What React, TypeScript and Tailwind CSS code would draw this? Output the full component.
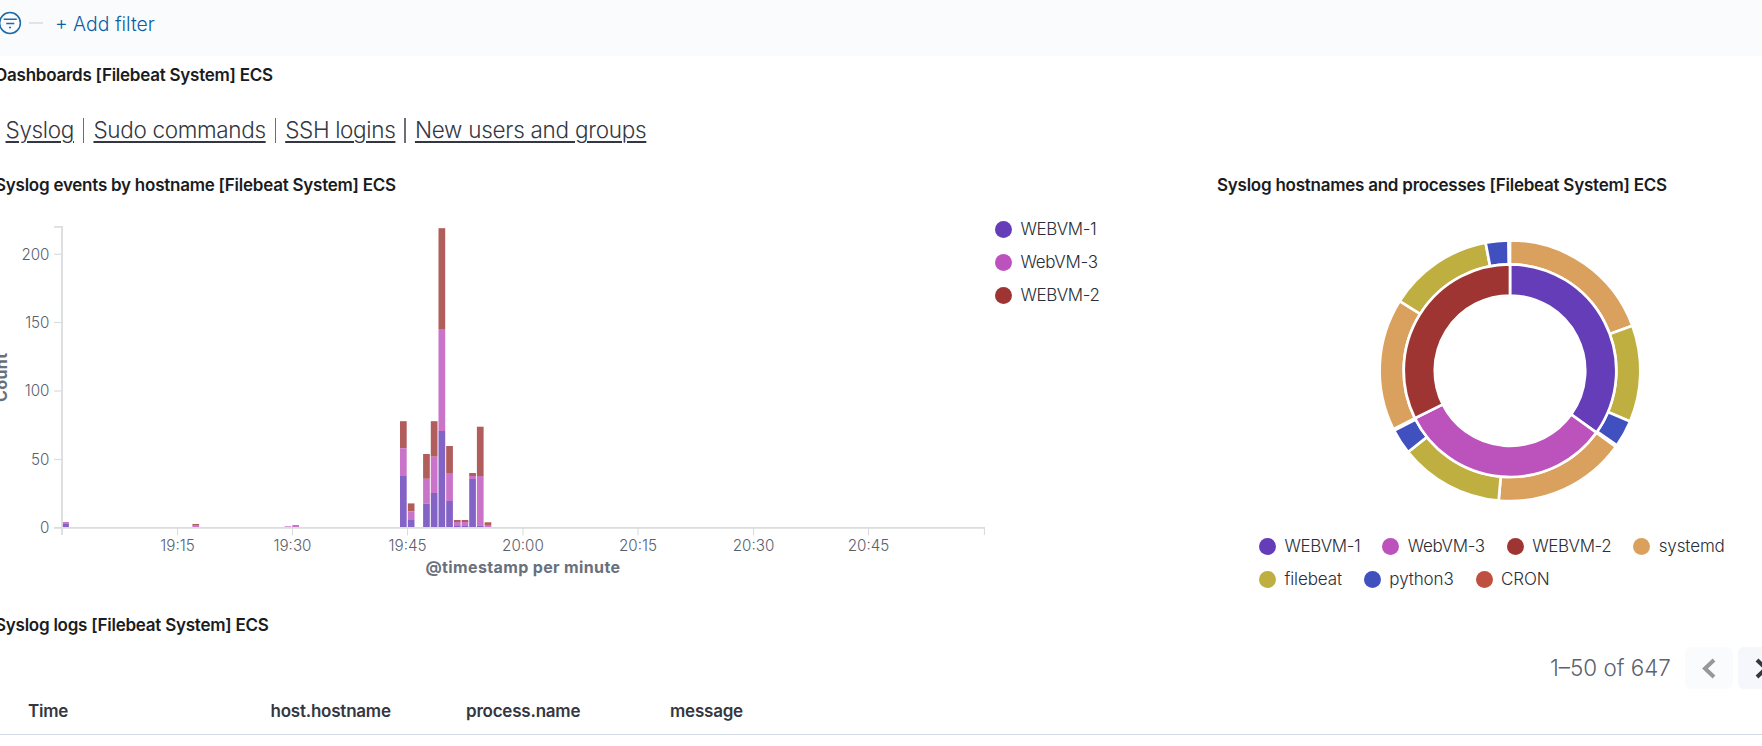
import React from "react";

const PURPLE = "#663db8";
const PINK = "#bc52bc";
const RED = "#9e3533";
const ORANGE = "#daa05d";
const OLIVE = "#bfaf40";
const BLUE = "#4050bf";
const BRICK = "#bf5040";

const BASE = 527;

// Left edge, then the tops of the red, pink and purple segments.
const bars: [number, number, number, number][] = [
  [62.2, 522, 522, 524],
  [192.4, 524, 525.7, 527],
  [284.6, 526.3, 526.3, 527],
  [292.3, 525, 525, 527],
  [400, 421.2, 448.2, 476],
  [407.8, 503.4, 511.3, 520],
  [423.1, 454, 478.8, 503.7],
  [430.8, 421.2, 456.7, 493],
  [438.5, 228.2, 329, 431],
  [446.2, 446, 473, 501],
  [453.9, 520, 522, 526],
  [461.6, 520, 522, 526],
  [469.2, 473, 476, 479],
  [476.9, 426.7, 476, 525.8],
  [484.6, 522.3, 525, 527],
];

const yTicks: [string, number][] = [
  ["200", 254.3],
  ["150", 322.5],
  ["100", 391],
  ["50", 459.5],
  ["0", 527.5],
];

const xTicks: [string, number][] = [
  ["19:15", 177.5],
  ["19:30", 292.5],
  ["19:45", 407.5],
  ["20:00", 523],
  ["20:15", 638],
  ["20:30", 753.5],
  ["20:45", 868.5],
];

type Slice = [number, number, string];

const inner: Slice[] = [
  [0, 125.6, PURPLE],
  [125.6, 243.4, PINK],
  [243.4, 360, RED],
];

const outer: Slice[] = [
  [0, 69.8, ORANGE],
  [69.8, 112.9, OLIVE],
  [112.9, 124.9, BLUE],
  [125.7, 185, ORANGE],
  [185, 231.4, OLIVE],
  [231.4, 242.7, BLUE],
  [243.4, 302.3, ORANGE],
  [302.3, 349.2, OLIVE],
  [349.2, 359.3, BLUE],
];

function arc(r0: number, r1: number, a0: number, a1: number) {
  const p = (r: number, a: number) => {
    const t = (a * Math.PI) / 180;
    return `${(r * Math.sin(t)).toFixed(2)} ${(-r * Math.cos(t)).toFixed(2)}`;
  };
  const big = a1 - a0 > 180 ? 1 : 0;
  return `M${p(r1, a0)}A${r1} ${r1} 0 ${big} 1 ${p(r1, a1)}L${p(r0, a1)}A${r0} ${r0} 0 ${big} 0 ${p(r0, a0)}Z`;
}

function Title({ children }: { children: React.ReactNode }) {
  return (
    <h2 className="whitespace-nowrap text-[17px] leading-6 font-semibold tracking-[-0.245px] text-[#1a1c21]">
      {children}
    </h2>
  );
}

function Histogram() {
  return (
    <svg className="block h-[380px] w-[990px] shrink-0" viewBox="0 205 990 380">
      <g opacity="0.8">
        {bars.map(([x, r, p, v]) => (
          <g key={x}>
            <rect x={x} y={r} width="6.7" height={p - r} fill={RED} />
            <rect x={x} y={p} width="6.7" height={v - p} fill={PINK} />
            <rect x={x} y={v} width="6.7" height={BASE - v} fill={PURPLE} />
          </g>
        ))}
      </g>
      <g stroke="#dadcdd" fill="none">
        <path d="M62 226V535" strokeWidth="1.8" />
        <path d="M54 226.9H62" strokeWidth="1.7" />
        <path d="M54 527.8H985" strokeWidth="1.8" />
        <path d="M984.5 528V535" strokeWidth="1.2" />
        {yTicks.map(([l, y]) => (
          <path key={l} d={`M54 ${y}H62`} strokeWidth="1.2" />
        ))}
        {xTicks.map(([l, x]) => (
          <path key={l} d={`M${x} 528V535.5`} strokeWidth="1.1" />
        ))}
      </g>
      <g fill="#59606d" fontSize="15.2" fontWeight="300">
        {yTicks.map(([l, y]) => (
          <text key={l} x="49.5" y={y + 5.2} textAnchor="end">
            {l}
          </text>
        ))}
        {xTicks.map(([l, x]) => (
          <text key={l} x={x} y="551.3" textAnchor="middle">
            {l}
          </text>
        ))}
      </g>
      <g fill="#69707d" fontSize="16" fontWeight="700">
        <text x="425.5" y="573" textLength="194.5">
          @timestamp per minute
        </text>
        <text transform="translate(7 402) rotate(-90)" textLength="49">
          Count
        </text>
      </g>
    </svg>
  );
}

function LegendItem({ color, label }: { color: string; label: string }) {
  const spacing = label.startsWith("WEB")
    ? "tracking-[-0.43px]"
    : label.startsWith("Web")
      ? "tracking-[-0.32px]"
      : "tracking-[-0.12px]";
  return (
    <li className="flex h-[33px] items-center gap-[8.5px]">
      <span className="size-[17px] rounded-full" style={{ backgroundColor: color }} />
      <span className={`whitespace-nowrap text-[17px] font-light text-[#2b2e38] ${spacing}`}>{label}</span>
    </li>
  );
}

function Donut() {
  return (
    <svg className="block h-[290px] w-[300px]" viewBox="-150 -150.7 300 290">
      <g stroke="#fff" strokeWidth="2.7">
        {outer.map(([a, b, c]) => (
          <path key={a} d={arc(106.3, 130.4, a, b)} fill={c} />
        ))}
        {inner.map(([a, b, c]) => (
          <path key={a} d={arc(75.2, 106.3, a, b)} fill={c} />
        ))}
      </g>
    </svg>
  );
}

export default function App() {
  return (
    <div className="h-[746px] w-full overflow-hidden bg-white font-['Inter',sans-serif] text-[#343741]">
      <header className="flex h-14 items-center bg-[#fafbfd] pb-[10px]">
        <svg className="-ml-px h-6 w-[23px]" viewBox="-1 0 23 24" fill="none" stroke="#1d6aa8" strokeWidth="1.5">
          <circle cx="10" cy="12" r="10.4" />
          <path d="M3.7 8.3H16.8M6.2 12.6H14.3M9 16.6H11" />
        </svg>
        <span className="ml-[7px] h-[1.5px] w-[14px] bg-[#dfe3ea]" />
        <button className="ml-3 pt-px text-[19.4px] leading-7 font-light text-[#0d5fa3]">+ Add filter</button>
      </header>

      <section className="-ml-[5px] h-[110px] pt-[7px]">
        <Title>Dashboards [Filebeat System] ECS</Title>
        <nav className="mt-[25px] ml-[10.5px] flex items-center gap-[9px] text-[22.5px] leading-9 font-light tracking-[-0.34px] whitespace-nowrap">
          <a className="underline decoration-2 underline-offset-[3px]">Syslog</a>
          <span className="h-[25px] w-[1.5px] bg-[#6d6f76]" />
          <a className="underline decoration-2 underline-offset-[3px]">Sudo commands</a>
          <span className="h-[25px] w-[1.5px] bg-[#6d6f76]" />
          <a className="underline decoration-2 underline-offset-[3px]">SSH logins</a>
          <span className="h-[25px] w-[1.5px] bg-[#6d6f76]" />
          <a className="tracking-[-0.27px] underline decoration-2 underline-offset-[3px]">New users and groups</a>
        </nav>
      </section>

      <main className="flex h-[440px]">
        <section className="w-[1217px] shrink-0 pt-[7px]">
          <div className="-ml-[5px]">
            <Title>Syslog events by hostname [Filebeat System] ECS</Title>
          </div>
          <div className="mt-2 flex">
            <Histogram />
            <ul className="ml-[5px] mt-2">
              <LegendItem color={PURPLE} label="WEBVM-1" />
              <LegendItem color={PINK} label="WebVM-3" />
              <LegendItem color={RED} label="WEBVM-2" />
            </ul>
          </div>
        </section>
        <section className="w-[545px] pt-[7px]">
          <Title>Syslog hostnames and processes [Filebeat System] ECS</Title>
          <div className="mt-[23px] ml-[143px]">
            <Donut />
          </div>
          <div className="mt-5 ml-[42px]">
            <ul className="flex gap-[22px]">
              <LegendItem color={PURPLE} label="WEBVM-1" />
              <LegendItem color={PINK} label="WebVM-3" />
              <LegendItem color={RED} label="WEBVM-2" />
              <LegendItem color={ORANGE} label="systemd" />
            </ul>
            <ul className="flex gap-[22px]">
              <LegendItem color={OLIVE} label="filebeat" />
              <LegendItem color={BLUE} label="python3" />
              <LegendItem color={BRICK} label="CRON" />
            </ul>
          </div>
        </section>
      </main>

      <section className="pt-[7px]">
        <div className="-ml-[5px]">
          <Title>Syslog logs [Filebeat System] ECS</Title>
        </div>
        <div className="mt-[10px] flex h-[42px] items-center pl-[1550px]">
          <span className="w-[134.5px] shrink-0 whitespace-nowrap text-[22.4px] font-light text-[#5b626f]">
            1–50 of 647
          </span>
          <button className="flex h-[42px] w-12 shrink-0 items-center justify-center rounded-md bg-[#fafbfd]">
            <svg className="size-6" viewBox="0 0 24 24" fill="none" stroke="#98989b" strokeWidth="4">
              <path d="M17 4L8 12.5L17 21" />
            </svg>
          </button>
          <button className="ml-[5.5px] flex h-[42px] w-12 shrink-0 items-center justify-center rounded-md bg-[#f5f7fa]">
            <svg className="size-6" viewBox="0 0 24 24" fill="none" stroke="#343741" strokeWidth="4">
              <path d="M7 4L16 12.5L7 21" />
            </svg>
          </button>
        </div>
        <div className="flex h-[46px] items-center border-b border-[#d3dae6] pl-7 text-[17px] font-semibold tracking-[-0.22px] whitespace-nowrap text-[#343741]">
          <span className="w-[242.5px]">Time</span>
          <span className="w-[195.5px]">host.hostname</span>
          <span className="w-[204px]">process.name</span>
          <span>message</span>
        </div>
      </section>
    </div>
  );
}
